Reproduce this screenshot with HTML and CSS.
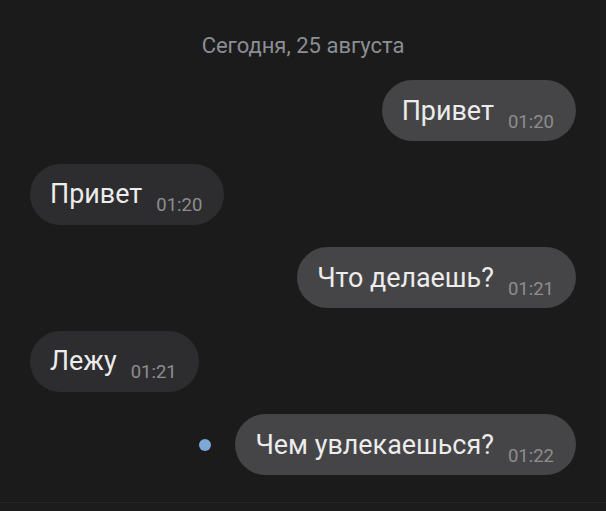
FILE: index.html
```html
<!DOCTYPE html>
<html lang="ru">
<head>
<meta charset="utf-8">
<link rel="stylesheet" href="styles.css">
</head>
<body>
<div class="chat">
  <div class="date">Сегодня, 25 августа</div>
  <div class="messages">
    <div class="row out">
      <div class="bubble out-b"><span class="text">Привет</span><span class="time">01:20</span></div>
    </div>
    <div class="row in">
      <div class="bubble in-b"><span class="text">Привет</span><span class="time">01:20</span></div>
    </div>
    <div class="row out">
      <div class="bubble out-b"><span class="text">Что делаешь?</span><span class="time">01:21</span></div>
    </div>
    <div class="row in">
      <div class="bubble in-b"><span class="text">Лежу</span><span class="time">01:21</span></div>
    </div>
    <div class="row out">
      <span class="unread"></span>
      <div class="bubble out-b"><span class="text">Чем увлекаешься?</span><span class="time">01:22</span></div>
    </div>
  </div>
</div>
<div class="bottom"></div>
</body>
</html>
```
FILE: styles.css
```css
html, body {
  margin: 0;
  padding: 0;
  background: #1b1b1c;
  height: 511px;
  overflow: hidden;
  font-family: Roboto, "Noto Sans", sans-serif;
}
.chat {
  height: 502px;
  box-sizing: border-box;
  padding: 33px 30px 0 30px;
}
.date {
  text-align: center;
  color: #8b8e93;
  font-size: 22px;
  line-height: 26px;
  height: 47px;
}
.messages {
  display: flex;
  flex-direction: column;
  gap: 22.5px;
}
.row {
  display: flex;
  align-items: center;
}
.row.out {
  justify-content: flex-end;
}
.row.in {
  justify-content: flex-start;
}
.bubble {
  height: 61px;
  box-sizing: border-box;
  border-radius: 31px;
  padding: 0 22px 0 20px;
  display: flex;
  align-items: center;
  gap: 14px;
}
.out-b {
  background: #454547;
}
.in-b {
  background: #2d2d2f;
}
.text {
  color: #ececec;
  font-size: 26.9px;
  line-height: 32px;
}
.time {
  color: #8d8d8f;
  font-size: 18.5px;
  line-height: 22px;
  margin-top: 22px;
}
.unread {
  width: 12px;
  height: 12px;
  border-radius: 50%;
  background: #7ea8d8;
  margin-right: 24px;
}
.bottom {
  height: 9px;
  border-top: 1px solid #262627;
  background: #1c1c1d;
}
```
